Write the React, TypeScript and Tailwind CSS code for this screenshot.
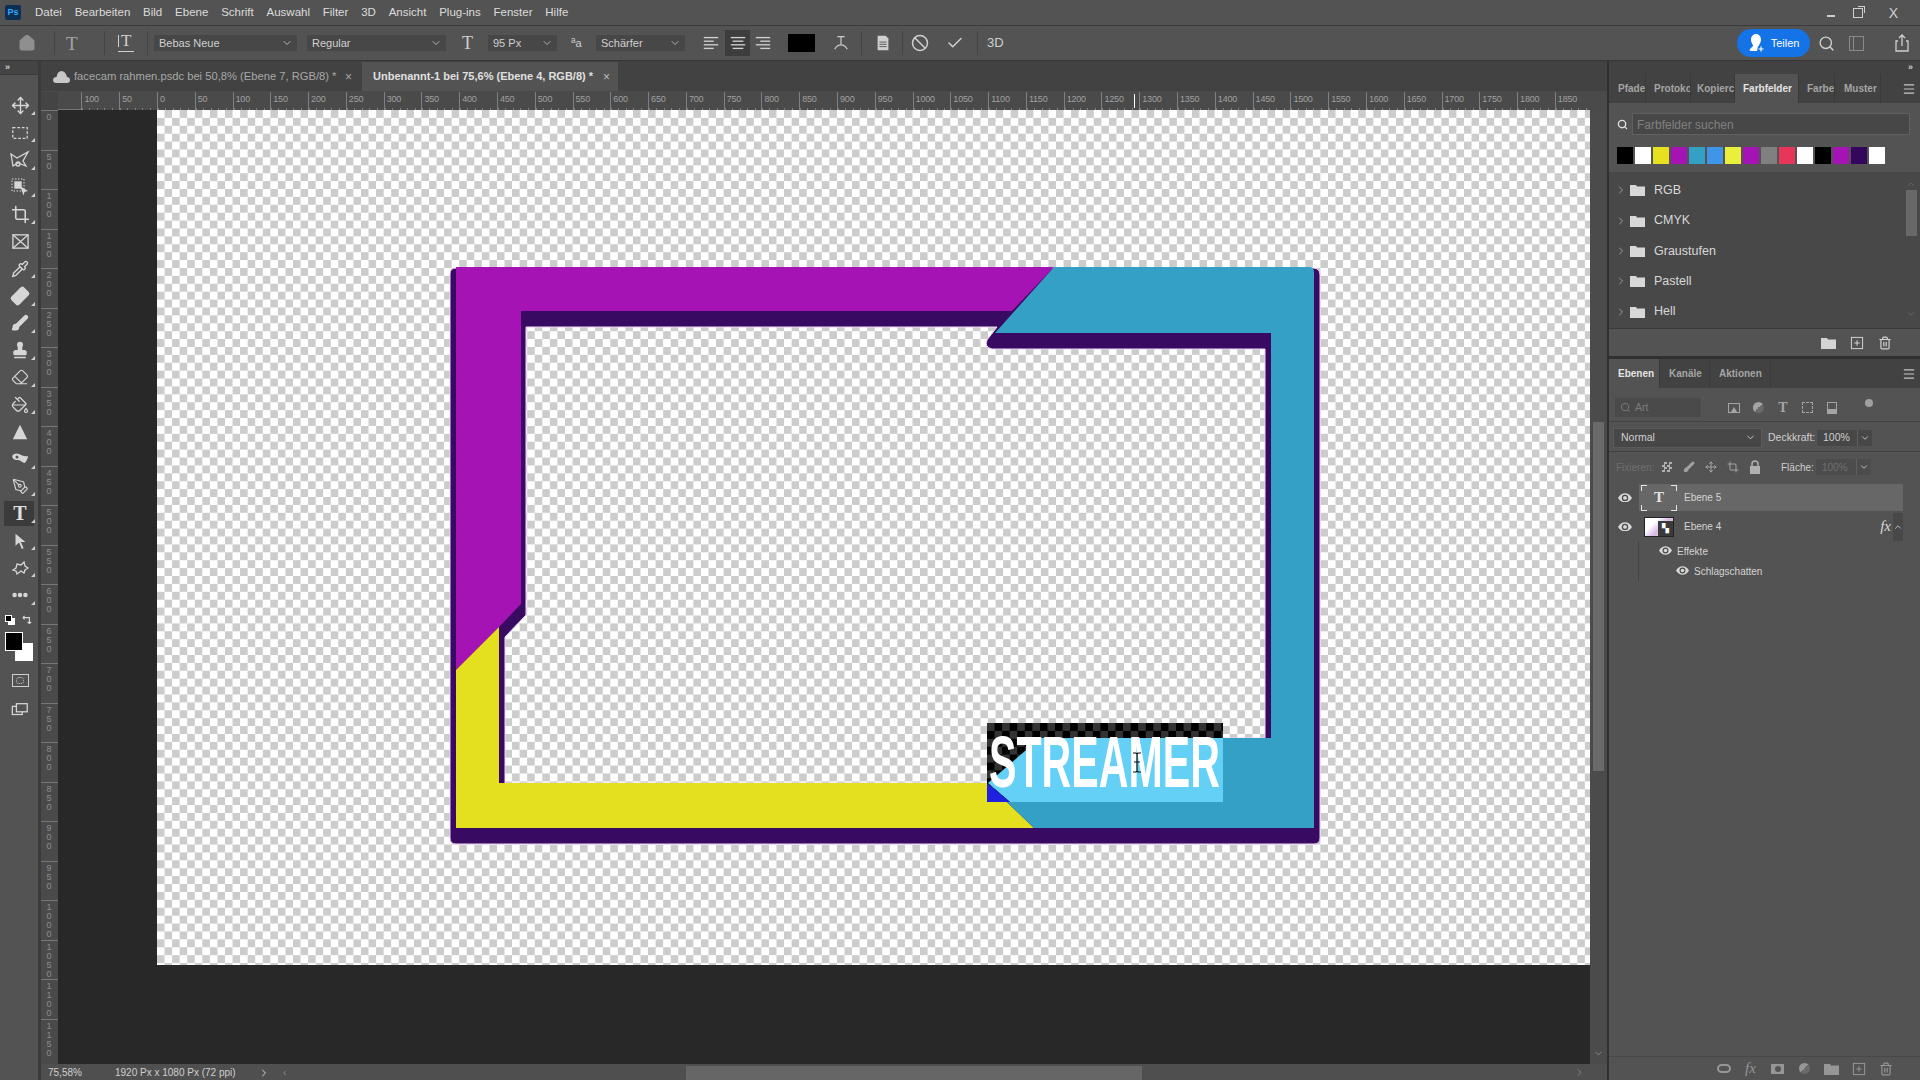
import type { ReactNode } from 'react';
import {
  Ban,
  Bandage,
  Brush,
  Check,
  ChevronDown,
  ChevronRight,
  ChevronUp,
  Crop,
  Eraser,
  House,
  Menu,
  Move,
  PaintBucket,
  PenTool,
  Pipette,
  Search,
  Stamp,
  Trash2,
} from 'lucide-react';

const FONT = "font-['Liberation_Sans','Noto_Sans',sans-serif]";

const menus = ['Datei', 'Bearbeiten', 'Bild', 'Ebene', 'Schrift', 'Auswahl', 'Filter', '3D', 'Ansicht', 'Plug-ins', 'Fenster', 'Hilfe'];
const swatches = ['#000000', '#ffffff', '#e6e020', '#a513b5', '#35a0c5', '#3f96e8', '#e9ef3c', '#a513b5', '#808080', '#e8355a', '#ffffff', '#000000', '#a513b5', '#35075c', '#ffffff'];
const folders = ['RGB', 'CMYK', 'Graustufen', 'Pastell', 'Hell'];
const hLabels = [100, 50, ...Array.from({ length: 38 }, (_, i) => i * 50)];
const vLabels = Array.from({ length: 24 }, (_, i) => i * 50);

function Svg({ size = 20, children }: { size?: number; children: ReactNode }) {
  return (
    <svg width={size} height={size} viewBox="0 0 20 20" fill="none" stroke="currentColor" strokeWidth="1.4">
      {children}
    </svg>
  );
}

function FolderIcon({ className = '' }: { className?: string }) {
  return (
    <svg width="15" height="12" viewBox="0 0 15 12" className={className} fill="currentColor">
      <path d="M0 1h6l1 1.4h8V12H0z" />
    </svg>
  );
}

function NewIcon() {
  return (
    <Svg size={14}>
      <rect x="2" y="2" width="16" height="16" />
      <path d="M10 6v8M6 10h8" />
    </Svg>
  );
}

function EyeIcon({ w = 14 }: { w?: number }) {
  return (
    <svg width={w} height={w * 0.7} viewBox="0 0 20 14">
      <path d="M0 7c3-4.5 6.300-6.500 10-6.500S17 2.500 20 7c-3 4.500-6.300 6.500-10 6.500S3 11.500 0 7z" fill="#d8d8d8" />
      <circle cx="10" cy="7" r="4.600" fill="#484848" />
      <circle cx="10" cy="7" r="2.800" fill="#d8d8d8" />
    </svg>
  );
}

function Caret() {
  return <span className="absolute right-[3px] bottom-[4px] h-0 w-0 border-b-[4px] border-l-[4px] border-b-[#cfcfcf] border-l-transparent" />;
}

const tools: { icon: ReactNode; active?: boolean }[] = [
  { icon: <Move size={19} strokeWidth={1.8} /> },
  { icon: <Svg size={18}><rect x="2" y="4" width="16" height="12" strokeDasharray="3 2" /></Svg> },
  {
    icon: (
      <Svg size={20}>
        <path d="M1 4l6 4 11-6-5 9 3 5-8-3-5 3z" strokeWidth="1.300" />
        <circle cx="8" cy="14" r="2" strokeWidth="1.300" />
      </Svg>
    ),
  },
  {
    icon: (
      <Svg size={20}>
        <rect x="2" y="2" width="12" height="12" strokeDasharray="1.500 1.500" strokeWidth="1" />
        <rect x="5" y="5" width="6" height="6" fill="currentColor" />
        <path d="M10 9l8 5-3.500 1-1 3.500z" fill="currentColor" stroke="none" />
      </Svg>
    ),
  },
  { icon: <Crop size={19} strokeWidth={2} /> },
  { icon: <Svg size={19}><rect x="2" y="3" width="16" height="14" /><path d="M2 3l16 14M18 3L2 17" /></Svg> },
  { icon: <Pipette size={18} strokeWidth={1.8} /> },
  {
    icon: (
      <span className="relative flex h-[20px] w-[20px] items-center justify-center">
        <Bandage size={20} strokeWidth={1.5} fill="currentColor" className="-rotate-45" />
      </span>
    ),
  },
  { icon: <Brush size={18} strokeWidth={1.8} fill="currentColor" /> },
  { icon: <Stamp size={18} strokeWidth={2} fill="currentColor" /> },
  { icon: <Eraser size={18} strokeWidth={1.6} /> },
  { icon: <PaintBucket size={18} strokeWidth={1.6} /> },
  { icon: <Svg size={18}><path d="M10 2l8 16H2z" fill="currentColor" stroke="none" /></Svg> },
  {
    icon: (
      <Svg size={20}>
        <path d="M2 7c2-3 5-3 7-2s6 3 9 2c0 3-2 5-3 7-3 0-4-3-7-3S3 11 2 7z" fill="currentColor" stroke="none" />
        <circle cx="7" cy="8" r="1.500" fill="#535353" stroke="none" />
      </Svg>
    ),
  },
  { icon: <PenTool size={17} strokeWidth={1.6} /> },
  { icon: <span className="font-['Liberation_Serif',serif] text-[20px] leading-none font-bold text-[#e0e0e0]">T</span>, active: true },
  { icon: <Svg size={18}><path d="M5 2l11 9h-5l3 7-2 .8-3-7-4 3.500z" fill="currentColor" stroke="none" /></Svg> },
  {
    icon: (
      <Svg size={20}>
        <path d="M3 12l3-2 1-4 4 1 3-3 1 4 3 2-3 2-1 3-3-2-4 3-1-3z" strokeWidth="1.300" />
      </Svg>
    ),
  },
  { icon: <Svg size={18}><circle cx="4" cy="10" r="1.800" fill="currentColor" /><circle cx="10" cy="10" r="1.800" fill="currentColor" /><circle cx="16" cy="10" r="1.800" fill="currentColor" /></Svg> },
];

function MenuBar() {
  return (
    <div className="flex h-[26px] shrink-0 items-center border-b border-[#3c3c3c] bg-[#535353] pl-[5px] text-[11.500px] text-[#dcdcdc]">
      <div className="flex h-[15px] w-[16px] items-center justify-center rounded-[2px] bg-[#0c2f52] text-[9px] font-bold text-[#31a8ff]">Ps</div>
      <div className="ml-[14px] flex gap-[12.800px]">
        {menus.map((m) => (
          <span key={m}>{m}</span>
        ))}
      </div>
      <div className="ml-auto flex items-center text-[#cfcfcf]">
        <span className="mt-[6px] h-[2px] w-[8px] bg-[#cfcfcf]" />
        <span className="relative ml-[18px] h-[10px] w-[10px] border border-[#cfcfcf]">
          <span className="absolute -top-[3px] -right-[3px] h-[7px] w-[7px] border-t border-r border-[#cfcfcf]" />
        </span>
        <span className="mr-[22px] ml-[26px] text-[14px] leading-none">X</span>
      </div>
    </div>
  );
}

function Select({ w, label, className = '' }: { w: string; label: string; className?: string }) {
  return (
    <div className={`flex h-[16px] items-center justify-between bg-[#474747] pr-[4px] pl-[5px] text-[11px] text-[#d0d0d0] ${w} ${className}`}>
      <span>{label}</span>
      <ChevronDown size={12} className="text-[#b5b5b5]" />
    </div>
  );
}

function Sep({ className }: { className: string }) {
  return <span className={`h-[24px] w-px bg-[#444444] ${className}`} />;
}

function AlignIcon({ lines }: { lines: string[] }) {
  return (
    <Svg size={18}>
      {lines.map((d) => (
        <path key={d} d={d} strokeWidth="1.500" />
      ))}
    </Svg>
  );
}

function OptionsBar() {
  return (
    <div className="flex h-[35px] shrink-0 items-center border-b border-[#363636] bg-[#535353] text-[#cfcfcf]">
      <House size={18} fill="currentColor" className="ml-[18px] text-[#8f8f8f]" />
      <Sep className="ml-[18px]" />
      <span className="ml-[11px] w-[12px] font-['Liberation_Serif',serif] text-[19px] leading-none text-[#a5a5a5]">T</span>
      <Sep className="ml-[26px]" />
      <span className="relative ml-[13px] h-[20px] w-[16px] pl-[3px] font-['Liberation_Serif',serif] text-[17px] leading-[16px]">
        T
        <span className="absolute top-[2px] left-0 h-[12px] w-px bg-[#cfcfcf]" />
        <span className="absolute right-0 bottom-[1px] left-0 h-px bg-[#cfcfcf]" />
      </span>
      <Sep className="ml-[13px]" />
      <Select w="w-[143px]" label="Bebas Neue" className="ml-[6px]" />
      <Select w="w-[139px]" label="Regular" className="ml-[10px]" />
      <span className="ml-[16px] w-[16px] font-['Liberation_Serif',serif] text-[18px] leading-none">T</span>
      <Select w="w-[69px]" label="95 Px" className="ml-[10px]" />
      <span className="ml-[14px] w-[14px] text-[11px]">
        <sup>a</sup>a
      </span>
      <Select w="w-[89px]" label="Schärfer" className="ml-[11px]" />
      <div className="ml-[17px] flex h-[26px] items-center">
        <AlignIcon lines={['M2 4h16', 'M2 8h11', 'M2 12h16', 'M2 16h11']} />
        <div className="ml-[5px] flex h-[26px] w-[25px] items-center justify-center bg-[#3d3d3d]">
          <AlignIcon lines={['M2 4h16', 'M4 8h12', 'M2 12h16', 'M4 16h12']} />
        </div>
        <span className="ml-[4px]">
          <AlignIcon lines={['M2 4h16', 'M7 8h11', 'M2 12h16', 'M7 16h11']} />
        </span>
      </div>
      <div className="ml-[16px] h-[18px] w-[27px] bg-black" />
      <span className="ml-[17px]">
        <Svg size={18}>
          <path d="M6 3h8M10 3v9M3 17c2-4 4-5 7-5s5 1 7 5" strokeWidth="1.300" />
        </Svg>
      </span>
      <Sep className="ml-[11px]" />
      <span className="ml-[12px]">
        <Svg size={18}>
          <path d="M4 2h9l3 3v13H4z" fill="currentColor" stroke="none" />
          <path d="M6 9h8M6 11.500h8M6 14h8" stroke="#535353" strokeWidth="1" />
        </Svg>
      </span>
      <Sep className="ml-[10px]" />
      <Ban size={18} className="ml-[8px]" />
      <Check size={18} className="ml-[17px]" />
      <Sep className="ml-[13px]" />
      <span className="ml-[9px] text-[13px] text-[#cfcfcf]">3D</span>
      <div className="ml-auto flex items-center">
        <div className="flex h-[28px] w-[73px] items-center justify-center gap-[5px] rounded-full bg-[#1473e6] text-[11px] text-white">
          <svg width="18" height="20" viewBox="0 0 18 20" fill="#ffffff">
            <path d="M8 1c3 0 5 2.500 5 5.500S11 12 11 12v1h-1l-1 5H3c-1 0-2-1-1-2l3-3v-1S3 9.500 3 6.500 5 1 8 1z" />
            <path d="M13 13v6M10 16h6" stroke="#1473e6" strokeWidth="3" />
            <path d="M13 13.500v5M10.500 16h5" stroke="#ffffff" strokeWidth="1.200" />
          </svg>
          Teilen
        </div>
        <Search size={17} strokeWidth={2} className="ml-[8px]" />
        <span className="ml-[14px] flex h-[15px] w-[15px] border border-[#8a8a8a]">
          <span className="h-full w-[4px] border-r border-[#8a8a8a]" />
        </span>
        <span className="mr-[8px] ml-[28px]">
          <Svg size={20}>
            <path d="M6 8H4v10h12V8h-2M10 13V2M7 5l3-3 3 3" strokeWidth="1.300" />
          </Svg>
        </span>
      </div>
    </div>
  );
}

function Toolbar() {
  return (
    <div className="flex w-[41px] shrink-0 flex-col border-r-[3px] border-[#3b3b3b] bg-[#535353] text-[#d6d6d6]">
      <div className="h-[13px] bg-[#444444] pl-[5px] text-[9px] leading-[12px] font-bold text-[#cfcfcf]">»</div>
      <div className="h-[18px] border-t border-[#3b3b3b]" />
      {tools.map((t, i) => (
        <div key={i} className="relative flex h-[27.200px] items-center justify-center pl-[2px]">
          {t.active && <span className="absolute inset-x-[4px] inset-y-[1px] bg-[#3b3b3b]" />}
          <span className="relative flex items-center justify-center">{t.icon}</span>
          {i !== 5 && i !== 12 && <Caret />}
        </div>
      ))}
      <div className="mt-[4px] flex h-[14px] items-center justify-between px-[5px]">
        <span className="relative h-[10px] w-[10px]">
          <span className="absolute right-0 bottom-0 h-[7px] w-[7px] bg-white" />
          <span className="absolute top-0 left-0 h-[7px] w-[7px] border border-white bg-black" />
        </span>
        <Svg size={12}>
          <path d="M3 6h11v10M3 6l3-3M3 6l3 3M14 16l-3-3M14 16l3-3" strokeWidth="2" />
        </Svg>
      </div>
      <div className="relative mt-[5px] h-[30px]">
        <span className="absolute top-[11px] left-[15px] h-[18px] w-[18px] bg-white" />
        <span className="absolute top-0 left-[5px] h-[19px] w-[18px] border border-white bg-black" />
      </div>
      <div className="mt-[12px] flex h-[14px] justify-center pl-[2px]">
        <span className="flex h-[13px] w-[17px] items-center justify-center border border-[#cfcfcf]">
          <span className="h-[7px] w-[8px] rounded-full border border-dotted border-[#cfcfcf]" />
        </span>
      </div>
      <div className="relative mt-[13px] flex h-[14px] justify-center pl-[2px]">
        <Svg size={18}>
          <rect x="1.500" y="6" width="11" height="9" fill="#535353" />
          <rect x="6" y="3" width="12" height="9" fill="#535353" />
        </Svg>
      </div>
    </div>
  );
}

function Tabs() {
  return (
    <div className="flex h-[31px] shrink-0 items-end border-b border-[#4a4a4a] bg-[#424242] text-[11px]">
      <div className="flex h-[29px] w-[321px] items-center text-[#a8a8a8]">
        <svg width="17" height="12" viewBox="0 0 17 12" fill="#c8c8c8" className="ml-[12px]">
          <path d="M3 12h11c2 0 3-1 3-3s-1.500-3-3-3C13 2 11 0 8.500 0S4 2 3.500 6C1 6 0 7.500 0 9s1 3 3 3z" />
        </svg>
        <span className="ml-[4px] w-[265px] text-[11.200px] whitespace-nowrap">facecam rahmen.psdc bei 50,8% (Ebene 7, RGB/8) *</span>
        <span className="ml-[6px] text-[12px]">×</span>
      </div>
      <div className="flex h-[29px] w-[256px] items-center bg-[#535353] pl-[11px] font-bold whitespace-nowrap text-[#e0e0e0]">
        <span className="w-[225px]">Unbenannt-1 bei 75,6% (Ebene 4, RGB/8) *</span>
        <span className="ml-[5px] text-[12px] font-normal text-[#bdbdbd]">×</span>
      </div>
    </div>
  );
}

function HRuler() {
  return (
    <div className="relative flex h-[18px] shrink-0 overflow-hidden bg-[#4a4a4a] text-[9px] leading-[15px] tracking-[-0.2px] text-[#a0a0a0]">
      <div className="w-[17px] shrink-0 bg-[#444444]" />
      <div className="w-[23.400px] shrink-0 border-b border-[#777777]" />
      {hLabels.map((n, i) => (
        <div key={i} className="relative h-full w-[37.790px] shrink-0 border-l border-[#808080] bg-[repeating-linear-gradient(90deg,#808080_0,#808080_1px,transparent_1px,transparent_7.500px)] bg-[length:100%_2px] bg-bottom bg-no-repeat pl-[2px]">
          {n}
        </div>
      ))}
      <span className="absolute top-[2px] left-[1093px] h-[14px] w-px bg-white" />
    </div>
  );
}

function VRuler() {
  return (
    <div className="flex w-[17px] shrink-0 flex-col overflow-hidden bg-[#4a4a4a] text-[9px] leading-[9px] text-[#8c8c8c]">
      {vLabels.map((n) => (
        <div key={n} className="flex h-[39.500px] shrink-0 flex-col items-center border-t border-[#777777] pt-[2px] pr-[1px]">
          {String(n)
            .split('')
            .map((c, i) => (
              <span key={i}>{c}</span>
            ))}
        </div>
      ))}
    </div>
  );
}

function Artwork() {
  return (
    <svg viewBox="157 110 1433 855" className="absolute inset-0 h-full w-full">
      <defs>
        <pattern id="dark-check" x="987" y="723" width="15.120" height="15.800" patternUnits="userSpaceOnUse">
          <rect width="7.560" height="7.900" fill="#333333" />
          <rect x="7.560" y="7.900" width="7.560" height="7.900" fill="#333333" />
          <rect x="7.560" width="7.560" height="7.900" fill="#000000" />
          <rect y="7.900" width="7.560" height="7.900" fill="#000000" />
        </pattern>
      </defs>
      <path
        fillRule="evenodd"
        fill="#380a62"
        stroke="#efd4f7"
        strokeWidth="1"
        d="M456 268H1313Q1320 268 1320 275V838Q1320 844 1314 844H456Q450 844 450 838V274Q450 268 456 268Z M526 327L526 615L505 637L505 783L1040 783L1040 738L1265 738L1265 349L992 349Q984 347 987 340L997 327Z"
      />
      <polygon fill="#a513b5" points="456,267 1054,267 1012,311 521,311 521,604 499,627 456,670" />
      <polygon fill="#e4e020" points="456,670 499,627 499,783 987,783 1034,828 456,828" />
      <path fill="#35a0c5" d="M1054 267H1309Q1314 267 1314 272V828H1034L987 783L1040 738H1271V333H995Z" />
      <rect x="987" y="723" width="236" height="79" fill="url(#dark-check)" />
      <polygon fill="#65d0f5" points="1040,738 1223,738 1223,802 1010,802 988,783" />
      <polygon fill="#2020e0" points="987,783 1010,802 987,802" />
      <text x="989" y="787" fontFamily="Liberation Sans, sans-serif" fontWeight="700" fontSize="73" fill="#ffffff" textLength="231" lengthAdjust="spacingAndGlyphs">
        STREAMER
      </text>
      <path d="M1133 753h3l1 1 1-1h3M1137 754v17M1133 772h3l1-1 1 1h3M1134 762h6" fill="none" stroke="#111111" strokeWidth="1.200" />
    </svg>
  );
}

function Workspace() {
  return (
    <div className="flex min-h-0 flex-1">
      <VRuler />
      <div className="relative min-w-0 flex-1 bg-[#282828] pl-[99px]">
        <div className="relative h-[855px] bg-[conic-gradient(#cccccc_25%,#ffffff_0_50%,#cccccc_0_75%,#ffffff_0)] bg-[length:15.120px_15.800px]">
          <Artwork />
        </div>
      </div>
      <div className="flex w-[17px] shrink-0 flex-col items-center bg-[#4b4b4b] text-[#8a8a8a]">
        <ChevronUp size={11} className="mt-[-11px]" />
        <div className="mt-[312px] h-[349px] w-[11px] bg-[#6a6a6a]" />
        <ChevronDown size={11} className="mt-[277px]" />
      </div>
    </div>
  );
}

function StatusBar() {
  return (
    <div className="flex h-[16px] shrink-0 items-center bg-[#4f4f4f] pt-[1px] pl-[7px] text-[10px] whitespace-nowrap text-[#cfcfcf]">
      <span className="w-[67px]">75,58%</span>
      <span className="w-[143px]">1920 Px x 1080 Px (72 ppi)</span>
      <ChevronRight size={12} />
      <span className="ml-[13px] w-[8px] text-[#8a8a8a]">‹</span>
      <div className="ml-[395px] h-[14px] w-[456px] bg-[#666666]" />
      <ChevronRight size={11} className="ml-[432px] text-[#8a8a8a]" />
    </div>
  );
}

function PanelTab({ label, w, active }: { label: string; w: string; active?: boolean }) {
  return (
    <div className={`flex h-full shrink-0 items-center overflow-hidden border-r border-[#3a3a3a] whitespace-nowrap ${w} ${active ? 'bg-[#535353] text-[#e4e4e4]' : 'text-[#a5a5a5]'}`}>
      {label}
    </div>
  );
}

function SwatchesPanel() {
  return (
    <div className="flex h-[282px] flex-col">
      <div className="flex h-[29px] shrink-0 items-center bg-[#424242] text-[10px] font-bold">
        <PanelTab label="Pfade" w="w-[37px] pl-[9px]" />
        <PanelTab label="Protoko" w="w-[45px] pl-[8px]" />
        <PanelTab label="Kopierc" w="w-[44px] pl-[6px]" />
        <PanelTab label="Farbfelder" w="w-[64px] pl-[8px]" active />
        <PanelTab label="Farbe" w="w-[36px] pl-[8px]" />
        <PanelTab label="Muster" w="w-[46px] pl-[9px]" />
        <Menu size={14} className="ml-[21px] text-[#c8c8c8]" />
      </div>
      <div className="h-[69px] shrink-0 bg-[#535353] pt-[10px] pl-[8px]">
        <div className="flex items-center">
          <Search size={11} strokeWidth={3} className="text-[#e0e0e0]" />
          <div className="ml-[4px] h-[22px] w-[278px] border border-[#606060] bg-[#474747] pl-[4px] text-[12px] leading-[22px] text-[#808080]">Farbfelder suchen</div>
        </div>
        <div className="mt-[12px] flex">
          {swatches.map((c, i) => (
            <span key={i} className="mr-[2px] h-[17px] w-[16px]" style={{ backgroundColor: c }} />
          ))}
        </div>
      </div>
      <div className="flex min-h-0 flex-1 bg-[#484848] text-[12.500px] text-[#d8d8d8]">
        <div className="flex flex-1 flex-col pt-[3px] pl-[6px]">
          {folders.map((f) => (
            <div key={f} className="flex h-[30.400px] items-center">
              <ChevronRight size={12} strokeWidth={1.500} className="text-[#b5b5b5]" />
              <FolderIcon className="ml-[3px] text-[#d8d8d8]" />
              <span className="ml-[9px]">{f}</span>
            </div>
          ))}
        </div>
        <div className="flex w-[12px] flex-col items-center pt-[7px] text-[#6f6f6f]">
          <ChevronUp size={10} />
          <div className="mt-[1px] h-[46px] w-[11px] bg-[#686868]" />
          <ChevronDown size={10} className="mt-[73px]" />
        </div>
        <div className="w-[3px]" />
      </div>
      <div className="flex h-[28px] shrink-0 items-center border-t border-[#3a3a3a] bg-[#535353] pl-[205px] text-[#d4d4d4]">
        <span className="flex w-[28.500px] justify-center"><FolderIcon /></span>
        <span className="flex w-[28.500px] justify-center"><NewIcon /></span>
        <span className="flex w-[28.500px] justify-center"><Trash2 size={14} /></span>
      </div>
    </div>
  );
}

function LockIcon() {
  return (
    <svg width="12" height="14" viewBox="0 0 12 14">
      <path d="M3 6V4a3 3 0 016 0v2" fill="none" stroke="#b0b0b0" strokeWidth="1.500" />
      <rect x="1" y="6" width="10" height="8" fill="#b0b0b0" />
    </svg>
  );
}

function IconCell({ w, children }: { w: string; children: ReactNode }) {
  return <span className={`flex items-center justify-center ${w}`}>{children}</span>;
}

function LayersPanel() {
  return (
    <div className="flex min-h-0 flex-1 flex-col bg-[#535353]">
      <div className="flex h-[29px] shrink-0 items-center bg-[#424242] text-[10px] font-bold">
        <PanelTab label="Ebenen" w="w-[51px] pl-[9px]" active />
        <PanelTab label="Kanäle" w="w-[50px] pl-[9px]" />
        <PanelTab label="Aktionen" w="w-[61px] pl-[9px]" />
        <Menu size={14} className="ml-[131px] text-[#c8c8c8]" />
      </div>
      <div className="flex h-[34px] shrink-0 items-center border-b border-[#434343] pt-[6px] pl-[6px] text-[#a5a5a5]">
        <div className="flex h-[19px] w-[86px] items-center bg-[#4a4a4a] pl-[5px] text-[10.500px] text-[#7c7c7c]">
          <Search size={11} />
          <span className="ml-[4px]">Art</span>
        </div>
        <div className="ml-[21px] flex">
          <IconCell w="w-[24.400px]">
            <span className="flex h-[10px] w-[12px] items-end border border-[#a5a5a5]">
              <span className="mx-auto h-0 w-0 border-r-[3px] border-b-[5px] border-l-[3px] border-r-transparent border-b-[#a5a5a5] border-l-transparent" />
            </span>
          </IconCell>
          <IconCell w="w-[24.400px]">
            <span className="h-[11px] w-[11px] rounded-full bg-[linear-gradient(135deg,#a5a5a5_50%,#6a6a6a_50%)]" />
          </IconCell>
          <IconCell w="w-[24.400px]">
            <span className="font-['Liberation_Serif',serif] text-[14px] leading-none font-bold">T</span>
          </IconCell>
          <IconCell w="w-[24.400px]">
            <span className="h-[11px] w-[11px] border border-dashed border-[#a5a5a5]" />
          </IconCell>
          <IconCell w="w-[24.400px]">
            <span className="h-[12px] w-[10px] border border-[#a5a5a5] bg-[linear-gradient(0deg,#a5a5a5_40%,transparent_40%)]" />
          </IconCell>
        </div>
        <span className="mb-[10px] ml-[21px] h-[8px] w-[8px] rounded-full bg-[#a0a0a0]" />
      </div>
      <div className="flex h-[30px] shrink-0 items-center border-b border-[#434343] pt-[2px] pl-[4px] text-[10.500px] text-[#cfcfcf]">
        <div className="flex h-[20px] w-[149px] items-center justify-between border border-[#5a5a5a] bg-[#474747] pr-[5px] pl-[7px]">
          <span>Normal</span>
          <ChevronDown size={11} />
        </div>
        <span className="ml-[6px] w-[49px]">Deckkraft:</span>
        <div className="flex h-[16px] w-[55px] items-center justify-between bg-[#474747] pl-[6px]">
          <span>100%</span>
          <span className="flex h-full w-[15px] items-center justify-center border-l border-[#606060]">
            <ChevronDown size={10} />
          </span>
        </div>
      </div>
      <div className="flex h-[30px] shrink-0 items-center pl-[7px] text-[10px] text-[#6f6f6f]">
        <span className="w-[40px]">Fixieren:</span>
        <IconCell w="w-[22px]">
          <span className="h-[10px] w-[10px] bg-[conic-gradient(#b0b0b0_25%,#535353_0_50%,#b0b0b0_0_75%,#535353_0)] bg-[length:5px_5px]" />
        </IconCell>
        <IconCell w="w-[22px]"><Brush size={12} fill="currentColor" className="text-[#a5a5a5]" /></IconCell>
        <IconCell w="w-[22px]"><Move size={12} className="text-[#a5a5a5]" /></IconCell>
        <IconCell w="w-[22px]"><Crop size={12} className="text-[#a5a5a5]" /></IconCell>
        <IconCell w="w-[22px]"><LockIcon /></IconCell>
        <span className="ml-[15px] w-[35px] text-[#cfcfcf]">Fläche:</span>
        <div className="flex h-[16px] w-[55px] items-center justify-between bg-[#4c4c4c] pl-[6px] text-[#6f6f6f]">
          <span>100%</span>
          <span className="flex h-full w-[15px] items-center justify-center border-l border-[#606060] text-[#cfcfcf]">
            <ChevronDown size={10} />
          </span>
        </div>
      </div>
      <div className="flex min-h-0 flex-1 flex-col pt-[2px] text-[10px] text-[#d4d4d4]">
        <div className="flex h-[27px] shrink-0 items-center">
          <span className="flex w-[30px] justify-center pl-[1px]"><EyeIcon /></span>
          <div className="flex h-[27px] w-[264px] items-center bg-[#676767] pl-[2px]">
            <span className="relative flex h-[26px] w-[36px] items-center justify-center font-['Liberation_Serif',serif] text-[15px] font-bold text-[#e4e4e4]">
              T
              <span className="absolute top-0 left-0 h-[6px] w-[6px] border-t border-l border-[#e4e4e4]" />
              <span className="absolute top-0 right-0 h-[6px] w-[6px] border-t border-r border-[#e4e4e4]" />
              <span className="absolute bottom-0 left-0 h-[6px] w-[6px] border-b border-l border-[#e4e4e4]" />
              <span className="absolute right-0 bottom-0 h-[6px] w-[6px] border-r border-b border-[#e4e4e4]" />
            </span>
            <span className="ml-[7px]">Ebene 5</span>
          </div>
        </div>
        <div className="mt-[1px] flex h-[29px] shrink-0 items-center">
          <span className="flex w-[30px] justify-center pl-[1px]"><EyeIcon /></span>
          <div className="flex w-[264px] items-center">
            <span className="ml-[5px] flex h-[20px] w-[30px] border border-[#222222] bg-[linear-gradient(135deg,#ffffff_30%,#d8b8ea_55%,#e8e4a0_80%)]">
              <span className="mt-auto ml-auto flex h-[15px] w-[15px] items-center justify-center bg-[#3a3a3a] text-[9px] leading-none text-white">▚</span>
            </span>
            <span className="ml-[10px]">Ebene 4</span>
            <i className="ml-auto font-['Liberation_Serif',serif] text-[15px] text-[#d8d8d8]">fx</i>
            <span className="ml-[2px] flex h-[28px] w-[10px] items-center justify-center bg-[#484848]">
              <ChevronUp size={10} />
            </span>
          </div>
        </div>
        <div className="ml-[29px] flex h-[20px] w-[264px] shrink-0 items-center border-l border-[#434343] pl-[20px]">
          <EyeIcon w={13} />
          <span className="ml-[5px]">Effekte</span>
        </div>
        <div className="ml-[29px] flex h-[20px] w-[264px] shrink-0 items-center border-l border-[#434343] pl-[37px]">
          <EyeIcon w={13} />
          <span className="ml-[5px]">Schlagschatten</span>
        </div>
      </div>
      <div className="flex h-[24px] shrink-0 items-center border-t border-[#484848] pl-[101px] text-[#969696]">
        <IconCell w="w-[27px]"><span className="h-[9px] w-[14px] rounded-full border-2 border-[#969696]" /></IconCell>
        <IconCell w="w-[27px]"><i className="font-['Liberation_Serif',serif] text-[15px] leading-none">fx</i></IconCell>
        <IconCell w="w-[27px]">
          <span className="flex h-[10px] w-[13px] items-center justify-center bg-[#969696]">
            <span className="h-[6px] w-[6px] rounded-full bg-[#535353]" />
          </span>
        </IconCell>
        <IconCell w="w-[27px]">
          <span className="h-[11px] w-[11px] rounded-full bg-[linear-gradient(135deg,#969696_50%,#6a6a6a_50%)]" />
        </IconCell>
        <IconCell w="w-[27px]"><FolderIcon /></IconCell>
        <IconCell w="w-[27px]"><NewIcon /></IconCell>
        <IconCell w="w-[27px]"><Trash2 size={14} /></IconCell>
      </div>
    </div>
  );
}

export default function App() {
  return (
    <div className={`flex h-[1080px] w-[1920px] flex-col overflow-hidden bg-[#535353] ${FONT}`}>
      <MenuBar />
      <OptionsBar />
      <div className="flex min-h-0 flex-1">
        <Toolbar />
        <div className="flex w-[1566px] shrink-0 flex-col">
          <Tabs />
          <HRuler />
          <Workspace />
          <StatusBar />
        </div>
        <div className="flex w-[313px] shrink-0 flex-col gap-[3px] bg-[#303030] pl-[2px]">
          <div className="-mb-[3px] flex h-[13px] shrink-0 items-center justify-end bg-[#424242] pr-[7px] text-[9px] font-bold text-[#cfcfcf]">»</div>
          <SwatchesPanel />
          <LayersPanel />
        </div>
      </div>
    </div>
  );
}
